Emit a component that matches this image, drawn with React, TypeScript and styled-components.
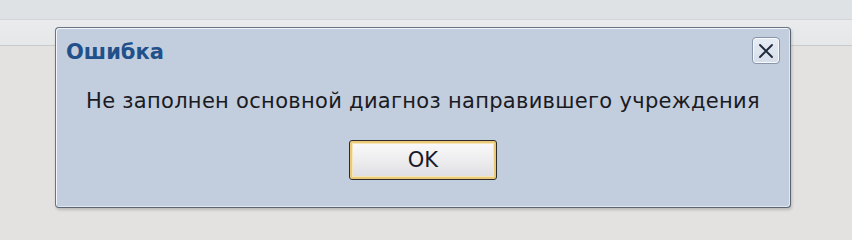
import React from 'react';
import styled, { createGlobalStyle } from 'styled-components';

const GlobalStyle = createGlobalStyle`
  html, body {
    margin: 0;
    padding: 0;
    background: #e3e2e0;
  }
  * {
    box-sizing: border-box;
  }
`;

const Page = styled.div`
  position: relative;
  width: 852px;
  height: 240px;
  overflow: hidden;
  background: #e3e2e0;
  font-family: 'DejaVu Sans', Tahoma, sans-serif;
`;

const TopBand = styled.div`
  height: 20px;
  background: #dfe2e5;
  border-bottom: 1px solid #d2d6da;
`;

const SubBand = styled.div`
  height: 26px;
  background: linear-gradient(#e9ebed, #e5e7e9);
  border-bottom: 1px solid #c9cacb;
`;

const Dialog = styled.div`
  position: absolute;
  left: 55px;
  top: 27px;
  width: 736px;
  height: 181px;
  border: 1px solid #6a7382;
  border-right-color: #5c6472;
  border-bottom-color: #5c6472;
  border-radius: 4px;
  background: #c2cedd;
  box-shadow: inset 1px 1px 0 #f2f6fb, inset -1px -1px 0 #dfe7f1, 1px 2px 3px rgba(0, 0, 0, 0.18);
  display: flex;
  flex-direction: column;
  padding: 9px 10px 0 10px;
`;

const Header = styled.div`
  display: flex;
  justify-content: space-between;
  align-items: flex-start;
`;

const Title = styled.div`
  font-family: 'DejaVu Sans', Tahoma, sans-serif;
  font-weight: bold;
  font-size: 21px;
  line-height: 26px;
  color: #22508a;
  padding-top: 2px;
`;

const CloseButton = styled.button`
  width: 28px;
  height: 27px;
  padding: 0;
  border: 1px solid #8896ab;
  border-radius: 4px;
  background: linear-gradient(#e7edf5, #d6deea);
  box-shadow: inset 0 0 0 1px #f7f9fc;
  display: flex;
  align-items: center;
  justify-content: center;
  cursor: pointer;
`;

const Message = styled.div`
  margin-top: 23px;
  text-align: center;
  font-size: 21px;
  line-height: 26px;
  color: #1a1a22;
  letter-spacing: 0.3px;
`;

const Footer = styled.div`
  display: flex;
  justify-content: center;
  margin-top: 26px;
`;

const OkButton = styled.button`
  width: 148px;
  height: 40px;
  border: 1px solid #2b2b2b;
  border-radius: 3px;
  background: linear-gradient(#fbfbfb, #ececee 55%, #dcdce2);
  box-shadow: inset 0 0 0 2px #ecc977, inset 0 0 0 3px #f6e7bb;
  font-family: 'DejaVu Sans', Tahoma, sans-serif;
  font-size: 21px;
  color: #1a1a2a;
  cursor: pointer;
`;

const App: React.FC = () => {
  return (
    <>
      <GlobalStyle />
      <Page>
        <TopBand />
        <SubBand />
        <Dialog>
          <Header>
            <Title>Ошибка</Title>
            <CloseButton aria-label="Закрыть">
              <svg width="16" height="16" viewBox="0 0 16 16">
                <path d="M2 2 L14 14 M14 2 L2 14" stroke="#1f2a3c" strokeWidth="1.9" strokeLinecap="round" />
              </svg>
            </CloseButton>
          </Header>
          <Message>Не заполнен основной диагноз направившего учреждения</Message>
          <Footer>
            <OkButton>OK</OkButton>
          </Footer>
        </Dialog>
      </Page>
    </>
  );
};

export default App;
